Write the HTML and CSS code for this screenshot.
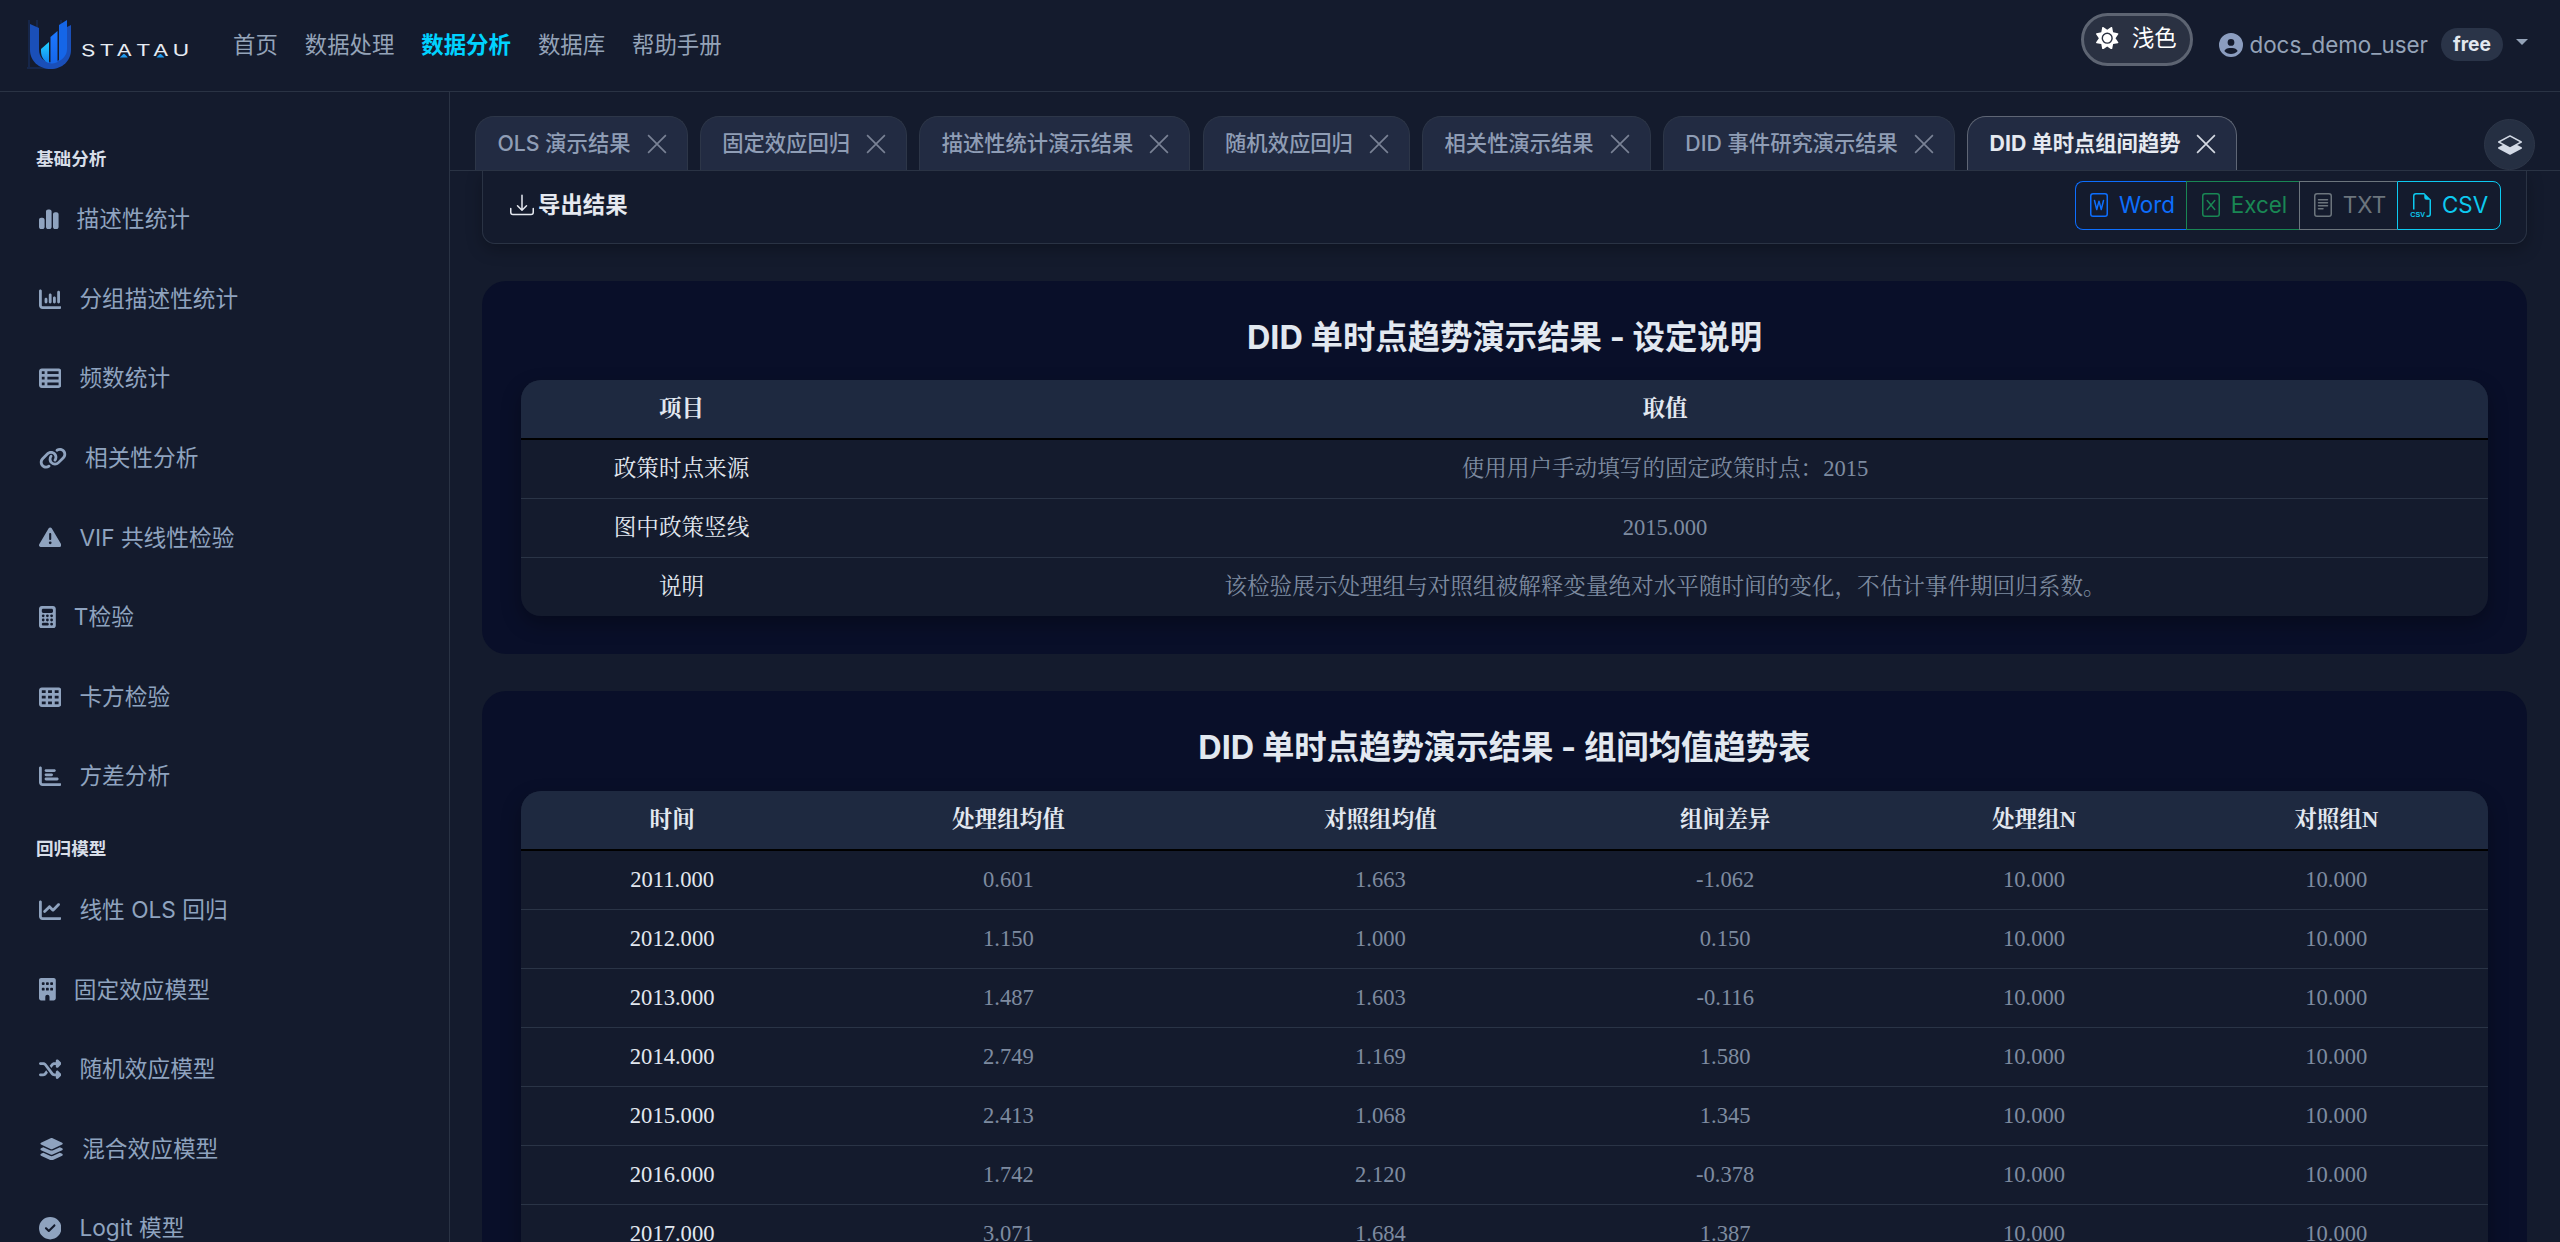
FILE: index.html
```html
<!DOCTYPE html>
<html lang="zh-CN">
<head>
<meta charset="utf-8">
<title>STATAU</title>
<link rel="stylesheet" href="styles.css">
</head>
<body>
<header class="topbar">
  <a class="logo">
    <svg class="logo-mark" viewBox="0 0 46 54">
      <defs>
        <linearGradient id="lg1" x1="0" y1="0" x2="0" y2="1"><stop offset="0" stop-color="#22d3ff"/><stop offset="1" stop-color="#1180f0"/></linearGradient>
        <linearGradient id="lg2" x1="0" y1="0" x2="0" y2="1"><stop offset="0" stop-color="#1d78ff"/><stop offset="1" stop-color="#1566e8"/></linearGradient>
      </defs>
      <path d="M2 1v47M10 1v40M34 1v40M0 49h22" class="logo-guide"/>
      <path d="M3 5 L12 9 V30 C12 39 17 43 24 43 C31 43 38 39 38 31 V9 L44 6 V31 C44 42 35 50 24 50 C12 50 3 42 3 31 Z" fill="#1a4fb8"/>
      <path d="M14 30 L22 23 V44 C18 43 14 39 14 32 Z" fill="url(#lg1)"/>
      <path d="M23.500 18 L30.500 12 V43 C28 44 26 44.500 23.500 44.500 Z" fill="url(#lg2)"/>
      <path d="M32 6 L40 1 V30 C40 36 36 40 32 42 Z" fill="#1566e8"/>
    </svg>
    <span class="logo-text">ST<span class="logo-a">A</span>T<span class="logo-a">A</span>U</span>
  </a>
  <nav class="mainnav">
    <a>首页</a><a>数据处理</a><a class="on">数据分析</a><a>数据库</a><a>帮助手册</a>
  </nav>
  <div class="topright">
    <button class="theme">
      <svg class="ic w512" viewBox="0 0 512 512"><path d="M361.5 1.2c5 2.1 8.6 6.6 9.6 11.9L391 121l107.9 19.8c5.3 1 9.8 4.6 11.9 9.6s1.500 10.700-1.600 15.200L446.900 256l62.300 90.300c3.100 4.500 3.700 10.200 1.600 15.200s-6.600 8.600-11.900 9.600L391 391 371.100 498.900c-1 5.300-4.600 9.800-9.600 11.900s-10.700 1.500-15.200-1.600L256 446.900l-90.300 62.300c-4.500 3.100-10.200 3.700-15.200 1.600s-8.600-6.600-9.600-11.900L121 391 13.100 371.100c-5.300-1-9.800-4.600-11.900-9.600s-1.500-10.700 1.600-15.200L65.100 256 2.800 165.700c-3.100-4.500-3.700-10.200-1.600-15.200s6.600-8.600 11.900-9.600L121 121 140.900 13.100c1-5.300 4.600-9.800 9.600-11.900s10.700-1.500 15.200 1.600L256 65.100 346.300 2.800c4.500-3.100 10.200-3.700 15.200-1.600zM160 256a96 96 0 1 1 192 0 96 96 0 1 1 -192 0zm224 0a128 128 0 1 0 -256 0 128 128 0 1 0 256 0z"/></svg>
      <span>浅色</span>
    </button>
    <div class="user">
      <svg class="ic w512" viewBox="0 0 512 512"><path d="M399 384.200C376.900 345.800 335.400 320 288 320H224c-47.400 0-88.900 25.800-111 64.200c35.200 39.200 86.200 63.800 143 63.800s107.800-24.700 143-63.800zM0 256a256 256 0 1 1 512 0A256 256 0 1 1 0 256zm256 16a72 72 0 1 0 0-144 72 72 0 1 0 0 144z"/></svg>
      <span class="uname">docs_demo_user</span>
      <span class="badge">free</span>
      <span class="caret"></span>
    </div>
  </div>
</header>

<div class="shell">
  <aside class="sidebar">
    <div class="sec">基础分析</div>
    <a class="item"><svg class="ic w448" viewBox="0 0 448 512"><path d="M160 80c0-26.500 21.500-48 48-48h32c26.500 0 48 21.500 48 48V432c0 26.500-21.500 48-48 48H208c-26.500 0-48-21.500-48-48V80zM0 272c0-26.500 21.500-48 48-48H80c26.500 0 48 21.500 48 48V432c0 26.500-21.500 48-48 48H48c-26.500 0-48-21.500-48-48V272zM368 96h32c26.500 0 48 21.500 48 48V432c0 26.500-21.500 48-48 48H368c-26.500 0-48-21.500-48-48V144c0-26.500 21.500-48 48-48z"/></svg><span>描述性统计</span></a>
    <a class="item"><svg class="ic w512" viewBox="0 0 512 512"><path d="M32 32c17.700 0 32 14.300 32 32V400c0 8.800 7.200 16 16 16H480c17.700 0 32 14.300 32 32s-14.300 32-32 32H80c-44.200 0-80-35.800-80-80V64C0 46.300 14.300 32 32 32zM160 224c17.700 0 32 14.300 32 32v64c0 17.700-14.300 32-32 32s-32-14.300-32-32V256c0-17.700 14.300-32 32-32zm128-64V320c0 17.700-14.300 32-32 32s-32-14.300-32-32V160c0-17.700 14.300-32 32-32s32 14.300 32 32zm64 32c17.700 0 32 14.300 32 32v96c0 17.700-14.300 32-32 32s-32-14.300-32-32V224c0-17.700 14.300-32 32-32zM480 96V320c0 17.700-14.300 32-32 32s-32-14.300-32-32V96c0-17.700 14.300-32 32-32s32 14.300 32 32z"/></svg><span>分组描述性统计</span></a>
    <a class="item"><svg class="ic w512" viewBox="0 0 512 512"><path d="M0 96C0 60.700 28.700 32 64 32H448c35.300 0 64 28.700 64 64V416c0 35.300-28.700 64-64 64H64c-35.300 0-64-28.700-64-64V96zm64 0v64h64V96H64zm384 0H192v64H448V96zM64 224v64h64V224H64zm384 0H192v64H448V224zM64 352v64h64V352H64zm384 0H192v64H448V352z"/></svg><span>频数统计</span></a>
    <a class="item"><svg class="ic w640" viewBox="0 0 640 512"><path d="M579.800 267.700c56.500-56.500 56.500-148 0-204.500c-50-50-128.800-56.500-186.300-15.400l-1.600 1.100c-14.400 10.300-17.700 30.300-7.400 44.600s30.300 17.700 44.600 7.400l1.600-1.100c32.100-22.900 76-19.300 103.800 8.600c31.500 31.500 31.500 82.500 0 114L422.300 334.800c-31.500 31.500-82.500 31.500-114 0c-27.900-27.900-31.500-71.800-8.600-103.800l1.100-1.600c10.300-14.400 6.900-34.400-7.400-44.600s-34.400-6.900-44.600 7.400l-1.100 1.600C206.500 251.200 213 330 263 380c56.500 56.500 148 56.500 204.500 0L579.800 267.700zM60.200 244.300c-56.500 56.500-56.500 148 0 204.500c50 50 128.800 56.500 186.300 15.400l1.600-1.100c14.400-10.300 17.700-30.300 7.400-44.600s-30.300-17.700-44.600-7.400l-1.600 1.100c-32.100 22.900-76 19.300-103.800-8.600C74 372 74 321 105.500 289.500L217.700 177.200c31.500-31.500 82.500-31.500 114 0c27.900 27.900 31.500 71.800 8.600 103.900l-1.100 1.600c-10.300 14.400-6.900 34.400 7.400 44.600s34.400 6.900 44.600-7.400l1.100-1.600C433.500 260.800 427 182 377 132c-56.500-56.500-148-56.500-204.500 0L60.200 244.300z"/></svg><span>相关性分析</span></a>
    <a class="item"><svg class="ic w512" viewBox="0 0 512 512"><path d="M256 32c14.200 0 27.300 7.500 34.500 19.800l216 368c7.300 12.400 7.300 27.700 .2 40.100S486.300 480 472 480H40c-14.300 0-27.600-7.700-34.700-20.100s-7-27.800 .2-40.100l216-368C228.700 39.500 241.800 32 256 32zm0 128c-13.300 0-24 10.700-24 24V296c0 13.300 10.700 24 24 24s24-10.700 24-24V184c0-13.300-10.700-24-24-24zm32 224a32 32 0 1 0 -64 0 32 32 0 1 0 64 0z"/></svg><span>VIF 共线性检验</span></a>
    <a class="item"><svg class="ic w384" viewBox="0 0 384 512"><path d="M64 0C28.700 0 0 28.700 0 64V448c0 35.300 28.700 64 64 64H320c35.300 0 64-28.700 64-64V64c0-35.300-28.700-64-64-64H64zM96 64H288c17.700 0 32 14.300 32 32v32c0 17.700-14.300 32-32 32H96c-17.700 0-32-14.300-32-32V96c0-17.700 14.300-32 32-32zm32 160a32 32 0 1 1 -64 0 32 32 0 1 1 64 0zM96 352a32 32 0 1 1 0-64 32 32 0 1 1 0 64zM64 416c0-17.700 14.300-32 32-32h96c17.700 0 32 14.300 32 32s-14.300 32-32 32H96c-17.700 0-32-14.300-32-32zM192 256a32 32 0 1 1 0-64 32 32 0 1 1 0 64zm32 64a32 32 0 1 1 -64 0 32 32 0 1 1 64 0zm64-64a32 32 0 1 1 0-64 32 32 0 1 1 0 64zm32 64a32 32 0 1 1 -64 0 32 32 0 1 1 64 0zm0 96a32 32 0 1 1 -64 0 32 32 0 1 1 64 0z"/></svg><span>T检验</span></a>
    <a class="item"><svg class="ic w512" viewBox="0 0 512 512"><path d="M64 32C28.700 32 0 60.700 0 96V416c0 35.300 28.700 64 64 64H448c35.300 0 64-28.700 64-64V96c0-35.300-28.700-64-64-64H64zm88 64v64H64V96h88zm56 0h88v64H208V96zm240 0v64H360V96h88zM64 224h88v64H64V224zm232 0v64H208V224h88zm64 0h88v64H360V224zM152 352v64H64V352h88zm56 0h88v64H208V352zm240 0v64H360V352h88z"/></svg><span>卡方检验</span></a>
    <a class="item"><svg class="ic w512" viewBox="0 0 512 512"><path d="M32 32c17.700 0 32 14.300 32 32V400c0 8.800 7.200 16 16 16H480c17.700 0 32 14.300 32 32s-14.300 32-32 32H80c-44.200 0-80-35.800-80-80V64C0 46.300 14.300 32 32 32zm96 96c0-17.700 14.300-32 32-32l192 0c17.700 0 32 14.300 32 32s-14.300 32-32 32l-192 0c-17.700 0-32-14.300-32-32zm32 64H288c17.700 0 32 14.300 32 32s-14.300 32-32 32H160c-17.700 0-32-14.300-32-32s14.300-32 32-32zm0 96H416c17.700 0 32 14.300 32 32s-14.300 32-32 32H160c-17.700 0-32-14.300-32-32s14.300-32 32-32z"/></svg><span>方差分析</span></a>
    <div class="sec sec-next">回归模型</div>
    <a class="item"><svg class="ic w512" viewBox="0 0 512 512"><path d="M64 64c0-17.700-14.300-32-32-32S0 46.300 0 64V400c0 44.200 35.800 80 80 80H480c17.700 0 32-14.300 32-32s-14.300-32-32-32H80c-8.800 0-16-7.200-16-16V64zm406.600 86.600c12.500-12.500 12.500-32.800 0-45.300s-32.800-12.500-45.300 0L320 210.700l-57.400-57.400c-12.500-12.500-32.800-12.500-45.300 0l-112 112c-12.500 12.500-12.500 32.800 0 45.300s32.800 12.500 45.300 0L240 221.300l57.400 57.400c12.500 12.500 32.800 12.500 45.300 0l128-128z"/></svg><span>线性 OLS 回归</span></a>
    <a class="item"><svg class="ic w384" viewBox="0 0 384 512"><path d="M48 0C21.500 0 0 21.500 0 48V464c0 26.500 21.500 48 48 48h96V432c0-26.500 21.500-48 48-48s48 21.500 48 48v80h96c26.500 0 48-21.500 48-48V48c0-26.500-21.500-48-48-48H48zM64 240c0-8.800 7.200-16 16-16h32c8.800 0 16 7.200 16 16v32c0 8.800-7.200 16-16 16H80c-8.800 0-16-7.200-16-16V240zm112-16h32c8.800 0 16 7.200 16 16v32c0 8.800-7.200 16-16 16H176c-8.800 0-16-7.200-16-16V240c0-8.800 7.200-16 16-16zm80 16c0-8.800 7.200-16 16-16h32c8.800 0 16 7.200 16 16v32c0 8.800-7.200 16-16 16H272c-8.800 0-16-7.200-16-16V240zM80 96h32c8.800 0 16 7.200 16 16v32c0 8.800-7.200 16-16 16H80c-8.800 0-16-7.200-16-16V112c0-8.800 7.200-16 16-16zm80 16c0-8.800 7.200-16 16-16h32c8.800 0 16 7.200 16 16v32c0 8.800-7.200 16-16 16H176c-8.800 0-16-7.200-16-16V112zM272 96h32c8.800 0 16 7.200 16 16v32c0 8.800-7.200 16-16 16H272c-8.800 0-16-7.200-16-16V112c0-8.800 7.200-16 16-16z"/></svg><span>固定效应模型</span></a>
    <a class="item"><svg class="ic w512" viewBox="0 0 512 512"><path d="M403.800 34.400c12-5 25.700-2.200 34.900 6.900l64 64c6 6 9.400 14.100 9.400 22.600s-3.400 16.600-9.400 22.600l-64 64c-9.200 9.200-22.900 11.900-34.900 6.900s-19.800-16.600-19.800-29.600V160H352c-10.100 0-19.600 4.700-25.600 12.800L284 229.300 244 176l31.200-41.600C293.300 110.200 321.800 96 352 96h32V64c0-12.900 7.800-24.600 19.800-29.600zM164 282.700L204 336l-31.200 41.600C154.700 401.800 126.200 416 96 416H32c-17.700 0-32-14.300-32-32s14.300-32 32-32H96c10.100 0 19.600-4.700 25.600-12.800L164 282.700zm274.600 188c-9.200 9.200-22.900 11.900-34.900 6.900s-19.800-16.600-19.800-29.600V416H352c-30.200 0-58.700-14.200-76.800-38.400L121.600 172.800c-6-8.100-15.500-12.800-25.600-12.800H32c-17.700 0-32-14.300-32-32s14.300-32 32-32H96c30.200 0 58.700 14.200 76.800 38.400L326.400 339.200c6 8.100 15.500 12.800 25.600 12.800h32V320c0-12.900 7.800-24.600 19.800-29.600s25.700-2.200 34.900 6.900l64 64c6 6 9.400 14.100 9.400 22.600s-3.400 16.600-9.400 22.600l-64 64z"/></svg><span>随机效应模型</span></a>
    <a class="item"><svg class="ic w576" viewBox="0 0 576 512"><path d="M264.500 5.200c14.900-6.900 32.100-6.900 47 0l218.600 101c8.500 3.900 13.900 12.400 13.900 21.800s-5.400 17.900-13.900 21.800l-218.600 101c-14.900 6.900-32.100 6.900-47 0L45.900 149.800C37.400 145.800 32 137.300 32 128s5.400-17.900 13.900-21.800L264.500 5.200zM476.900 209.600l53.200 24.600c8.500 3.900 13.900 12.400 13.900 21.800s-5.400 17.900-13.900 21.800l-218.600 101c-14.900 6.900-32.100 6.900-47 0L45.900 277.800C37.400 273.800 32 265.300 32 256s5.400-17.900 13.900-21.800l53.200-24.600 152 70.200c23.400 10.800 50.400 10.800 73.800 0l152-70.200zm-152 198.200l152-70.200 53.200 24.600c8.500 3.900 13.900 12.400 13.900 21.800s-5.400 17.900-13.900 21.800l-218.600 101c-14.900 6.900-32.100 6.900-47 0L45.900 405.800C37.400 401.800 32 393.300 32 384s5.400-17.900 13.900-21.800l53.200-24.600 152 70.200c23.400 10.800 50.400 10.800 73.800 0z"/></svg><span>混合效应模型</span></a>
    <a class="item"><svg class="ic w512" viewBox="0 0 512 512"><path d="M256 512A256 256 0 1 0 256 0a256 256 0 1 0 0 512zM369 209L241 337c-9.400 9.400-24.600 9.400-33.900 0l-64-64c-9.400-9.400-9.400-24.600 0-33.900s24.600-9.400 33.900 0l47 47L335 175c9.400-9.400 24.600-9.400 33.900 0s9.400 24.600 0 33.900z"/></svg><span>Logit 模型</span></a>
  </aside>

  <main class="main">
    <div class="tabbar">
      <div class="tabs">
        <a class="tab">OLS 演示结果<svg class="x" viewBox="0 0 18 18"><path d="M1 1 17 17M17 1 1 17"/></svg></a>
        <a class="tab">固定效应回归<svg class="x" viewBox="0 0 18 18"><path d="M1 1 17 17M17 1 1 17"/></svg></a>
        <a class="tab">描述性统计演示结果<svg class="x" viewBox="0 0 18 18"><path d="M1 1 17 17M17 1 1 17"/></svg></a>
        <a class="tab">随机效应回归<svg class="x" viewBox="0 0 18 18"><path d="M1 1 17 17M17 1 1 17"/></svg></a>
        <a class="tab">相关性演示结果<svg class="x" viewBox="0 0 18 18"><path d="M1 1 17 17M17 1 1 17"/></svg></a>
        <a class="tab">DID 事件研究演示结果<svg class="x" viewBox="0 0 18 18"><path d="M1 1 17 17M17 1 1 17"/></svg></a>
        <a class="tab active">DID 单时点组间趋势<svg class="x" viewBox="0 0 18 18"><path d="M1 1 17 17M17 1 1 17"/></svg></a>
      </div>
      <button class="layers"><svg viewBox="0 0 16 16"><path d="M8.235 1.559a.5.5 0 0 0-.47 0l-7.5 4a.5.5 0 0 0 0 .882L3.188 8 .264 9.559a.5.5 0 0 0 0 .882l7.5 4a.5.5 0 0 0 .47 0l7.500-4a.5.5 0 0 0 0-.882L12.813 8l2.922-1.559a.5.5 0 0 0 0-.882l-7.500-4zM8 9.433 1.562 6 8 2.567 14.438 6 8 9.433z"/></svg></button>
    </div>

    <div class="content">
      <div class="exportbar">
        <div class="export-title">
          <svg viewBox="0 0 16 16"><path d="M.5 9.900a.5.5 0 0 1 .5.500v2.500a1 1 0 0 0 1 1h12a1 1 0 0 0 1-1v-2.500a.5.5 0 0 1 1 0v2.500a2 2 0 0 1-2 2H2a2 2 0 0 1-2-2v-2.500a.5.5 0 0 1 .5-.5z"/><path d="M7.646 11.854a.5.5 0 0 0 .708 0l3-3a.5.5 0 0 0-.708-.708L8.500 10.293V1.500a.5.5 0 0 0-1 0v8.793L5.354 8.146a.5.5 0 1 0-.708.708l3 3z"/></svg>
          <span>导出结果</span>
        </div>
        <div class="btn-group">
          <a class="ebtn word"><svg viewBox="0 0 16 16"><path d="M4.879 4.515a.5.5 0 0 1 .606.364l1.036 4.144.997-3.655a.5.5 0 0 1 .964 0l.997 3.655 1.036-4.144a.5.5 0 0 1 .97.242l-1.500 6a.5.5 0 0 1-.967.01L8 7.402l-1.018 3.730a.5.5 0 0 1-.967-.01l-1.500-6a.5.5 0 0 1 .364-.606z"/><path d="M4 0a2 2 0 0 0-2 2v12a2 2 0 0 0 2 2h8a2 2 0 0 0 2-2V2a2 2 0 0 0-2-2H4zm0 1h8a1 1 0 0 1 1 1v12a1 1 0 0 1-1 1H4a1 1 0 0 1-1-1V2a1 1 0 0 1 1-1z"/></svg>Word</a>
          <a class="ebtn excel"><svg viewBox="0 0 16 16"><path d="M5.180 4.616a.5.5 0 0 1 .704.064L8 7.219l2.116-2.540a.5.5 0 1 1 .768.641L8.651 8l2.233 2.680a.5.5 0 0 1-.768.640L8 8.781l-2.116 2.540a.5.5 0 0 1-.768-.641L7.349 8 5.116 5.320a.5.5 0 0 1 .064-.704z"/><path d="M4 0a2 2 0 0 0-2 2v12a2 2 0 0 0 2 2h8a2 2 0 0 0 2-2V2a2 2 0 0 0-2-2H4zm0 1h8a1 1 0 0 1 1 1v12a1 1 0 0 1-1 1H4a1 1 0 0 1-1-1V2a1 1 0 0 1 1-1z"/></svg>Excel</a>
          <a class="ebtn txt"><svg viewBox="0 0 16 16"><path d="M5 4a.5.5 0 0 0 0 1h6a.5.5 0 0 0 0-1H5zm-.5 2.500A.5.5 0 0 1 5 6h6a.5.5 0 0 1 0 1H5a.5.5 0 0 1-.5-.5zM5 8a.5.5 0 0 0 0 1h6a.5.5 0 0 0 0-1H5zm0 2a.5.5 0 0 0 0 1h3a.5.5 0 0 0 0-1H5z"/><path d="M4 0a2 2 0 0 0-2 2v12a2 2 0 0 0 2 2h8a2 2 0 0 0 2-2V2a2 2 0 0 0-2-2H4zm0 1h8a1 1 0 0 1 1 1v12a1 1 0 0 1-1 1H4a1 1 0 0 1-1-1V2a1 1 0 0 1 1-1z"/></svg>TXT</a>
          <a class="ebtn csv"><svg viewBox="0 0 16 16"><path d="M14 4.500V14a2 2 0 0 1-2 2h-1v-1h1a1 1 0 0 0 1-1V4.500h-2A1.500 1.500 0 0 1 9.500 3V1H4a1 1 0 0 0-1 1v9H2V2a2 2 0 0 1 2-2h5.500L14 4.500Z"/><text x="0.200" y="15.700" textLength="9.800" lengthAdjust="spacingAndGlyphs" class="csv-mini">CSV</text></svg>CSV</a>
        </div>
      </div>

      <section class="card first">
        <h2>DID 单时点趋势演示结果 - 设定说明</h2>
        <div class="tblwrap">
          <table class="t1">
            <colgroup><col class="c-item"><col></colgroup>
            <thead><tr><th>项目</th><th>取值</th></tr></thead>
            <tbody>
              <tr><th>政策时点来源</th><td>使用用户手动填写的固定政策时点：2015</td></tr>
              <tr><th>图中政策竖线</th><td>2015.000</td></tr>
              <tr><th>说明</th><td>该检验展示处理组与对照组被解释变量绝对水平随时间的变化，不估计事件期回归系数。</td></tr>
            </tbody>
          </table>
        </div>
      </section>

      <section class="card">
        <h2>DID 单时点趋势演示结果 - 组间均值趋势表</h2>
        <div class="tblwrap">
          <table class="t2">
            <colgroup><col class="c1"><col class="c2"><col class="c3"><col class="c4"><col class="c5"><col class="c6"></colgroup>
            <thead><tr><th>时间</th><th>处理组均值</th><th>对照组均值</th><th>组间差异</th><th>处理组N</th><th>对照组N</th></tr></thead>
            <tbody>
              <tr><th>2011.000</th><td>0.601</td><td>1.663</td><td>-1.062</td><td>10.000</td><td>10.000</td></tr>
              <tr><th>2012.000</th><td>1.150</td><td>1.000</td><td>0.150</td><td>10.000</td><td>10.000</td></tr>
              <tr><th>2013.000</th><td>1.487</td><td>1.603</td><td>-0.116</td><td>10.000</td><td>10.000</td></tr>
              <tr><th>2014.000</th><td>2.749</td><td>1.169</td><td>1.580</td><td>10.000</td><td>10.000</td></tr>
              <tr><th>2015.000</th><td>2.413</td><td>1.068</td><td>1.345</td><td>10.000</td><td>10.000</td></tr>
              <tr><th>2016.000</th><td>1.742</td><td>2.120</td><td>-0.378</td><td>10.000</td><td>10.000</td></tr>
              <tr><th>2017.000</th><td>3.071</td><td>1.684</td><td>1.387</td><td>10.000</td><td>10.000</td></tr>
            </tbody>
          </table>
        </div>
      </section>
    </div>
  </main>
</div>
</body>
</html>
```
FILE: styles.css
```css
* { box-sizing: border-box; }
html, body { height: 100%; margin: 0; }
body {
  overflow: hidden;
  background: #141b2d;
  color: #94a3b8;
  font-family: "Inter", "Noto Sans CJK SC", sans-serif;
  font-size: 22.4px;
  line-height: 1.5;
  display: flex;
  flex-direction: column;
}
a { color: inherit; text-decoration: none; }
button { font: inherit; color: inherit; }
.ic { height: 22.4px; fill: currentColor; flex: none; display: block; }
.w384 { width: 16.8px; }
.w448 { width: 19.6px; }
.w512 { width: 22.4px; }
.w576 { width: 25.2px; }
.w640 { width: 28px; }

/* top bar */
.topbar {
  height: 92px;
  flex: none;
  display: flex;
  align-items: center;
  border-bottom: 1px solid #2a3344;
  padding: 0 32px 0 27px;
}
.logo { display: flex; align-items: center; width: 206px; flex: none; }
.logo-mark { width: 46px; height: 54px; flex: none; }
.logo-guide { fill: none; stroke: #1d4aa0; stroke-width: .5; }
.logo-text {
  margin-left: 8px;
  margin-top: 9px;
  font-size: 16.5px;
  line-height: 20px;
  letter-spacing: 3px;
  color: #e6ebf2;
  font-family: "Inter", sans-serif;
  transform: scaleX(1.37);
  transform-origin: left center;
}
.logo-a { position: relative; }
.logo-a::after {
  content: "";
  position: absolute;
  left: 2.5px;
  bottom: 2.5px;
  width: 6px;
  height: 4px;
  background: #1e9bf0;
  clip-path: polygon(50% 0, 100% 100%, 0 100%);
}
.mainnav { display: flex; gap: 27px; margin-top: -1px; }
.mainnav .on { color: #00d2ff; font-weight: 700; }
.topright { margin-left: auto; display: flex; align-items: center; }
.theme {
  display: flex;
  align-items: center;
  gap: 13px;
  height: 53px;
  width: 112px;
  padding: 0 0 3px 12px;
  border: 3px solid #5d6472;
  border-radius: 27px;
  background: #2a3142;
  color: #fff;
  margin-top: -12px;
}
.user { display: flex; align-items: center; margin-left: 26px; margin-top: -1px; }
.user .ic { fill: #8b9dbf; width: 24px; height: 24px; }
.uname { margin-left: 6px; }
.badge {
  margin-left: 13px;
  width: 62px;
  height: 33px;
  border-radius: 17px;
  background: #2a3448;
  color: #e2e8f0;
  font-size: 19.2px;
  font-weight: 700;
  line-height: 33px;
  text-align: center;
}
.caret {
  margin: -6px 0 0 13px;
  width: 0;
  height: 0;
  border-left: 6px solid transparent;
  border-right: 6px solid transparent;
  border-top: 6px solid #94a3b8;
}

/* shell */
.shell { flex: 1; display: flex; min-height: 0; }
.sidebar {
  width: 450px;
  flex: none;
  border-right: 1px solid #2a3344;
  padding: 55.5px 0 0 39px;
  overflow: hidden;
}
.sec {
  margin: 0 0 11px -3px;
  font-size: 17.6px;
  line-height: 21px;
  font-weight: 700;
  color: #d8dee8;
}
.sec-next { margin-top: 22px; }
.item { display: flex; align-items: center; gap: 18px; height: 79.6px; color: #8fa3bf; font-size: 22.7px; }

/* main */
.main { flex: 1; min-width: 0; display: flex; flex-direction: column; }
.tabbar {
  flex: none;
  height: 79px;
  padding: 24px 25px 0 25px;
  display: flex;
  justify-content: space-between;
  align-items: flex-end;
  border-bottom: 1px solid #2a3344;
}
.tabs { display: flex; gap: 12.2px; }
.tab {
  display: flex;
  align-items: center;
  gap: 16px;
  height: 54px;
  padding: 0 20px 0 21.5px;
  background: #222b42;
  border: 1px solid #2d3648;
  border-bottom: 0;
  border-radius: 19px 19px 0 0;
  font-size: 21.3px;
  font-weight: 500;
  color: #8f9db5;
  white-space: nowrap;
}
.x { width: 20px; height: 20px; fill: none; stroke: #798295; stroke-width: 1.5; flex: none; }
.tab.active { color: #e5e9f0; border-color: #5f6675; border-width: 1px 1px 2px; font-weight: 700; }
.tab.active .x { stroke: #d4d9e2; }
.layers {
  width: 51px;
  height: 51px;
  padding: 0;
  border-radius: 50%;
  background: #252f42;
  border: 1px solid #2d3648;
  display: flex;
  align-items: center;
  justify-content: center;
}
.layers svg { width: 24px; height: 24px; fill: #d3dae6; }

.content { flex: 1; min-height: 0; overflow: hidden; padding: 0 33px 0 32px; }
.exportbar {
  height: 73px;
  display: flex;
  justify-content: space-between;
  align-items: center;
  padding: 0 25px 4px 27px;
  border: 1px solid #2a3344;
  border-top: 0;
  border-radius: 0 0 13px 13px;
  box-shadow: 0 6px 16px rgba(0, 0, 0, .25);
  margin-bottom: 37px;
}
.export-title { display: flex; align-items: center; gap: 4px; color: #e5e9f0; font-weight: 700; }
.export-title svg { width: 24px; height: 24px; fill: #e5e9f0; }
.btn-group { display: flex; height: 49px; }
.ebtn {
  display: flex;
  align-items: center;
  justify-content: center;
  gap: 8px;
  border: 1.6px solid currentColor;
  border-right-width: 0;
  height: 49px;
}
.ebtn svg { width: 24px; height: 24px; fill: currentColor; flex: none; overflow: visible; }
.word { color: #0d6efd; width: 111px; border-radius: 8px 0 0 8px; }
.excel { color: #198754; width: 113px; }
.txt { color: #6c757d; width: 98px; }
.csv { color: #0dcaf0; width: 104px; border-right-width: 1.6px; border-radius: 0 8px 8px 0; }
.csv-mini { font: 700 5.4px "Liberation Sans", sans-serif; fill: currentColor; }

.card {
  background: #090f29;
  border-radius: 24px;
  padding: 38px 39px 37px 39px;
  margin-bottom: 37px;
}
.card h2 {
  margin: 0 0 24px;
  font-size: 32.4px;
  line-height: 38px;
  font-weight: 700;
  text-align: center;
  color: #e2e8f0;
}
.card.first { padding-bottom: 38px; }
.card.first h2 { margin-bottom: 23px; }
.tblwrap {
  border-radius: 20px;
  overflow: hidden;
  box-shadow: 0 8px 20px rgba(0, 0, 0, .3);
}
table {
  width: 100%;
  border-collapse: collapse;
  table-layout: fixed;
  background: #141b2d;
  font-family: "Liberation Serif", "Noto Serif CJK SC", serif;
  font-size: 22.6px;
}
th, td { height: 59px; padding: 0; text-align: center; font-weight: 400; border-top: 1px solid #2a3446; }
thead th { background: #1e2940; color: #e2e8f0; font-weight: 700; border-top: 0; border-bottom: 2px solid #000; }
tbody th { color: #e2e8f0; }
td { color: #7e8ba0; }
tbody tr:first-child th, tbody tr:first-child td { border-top: 0; }
.c-item { width: 321px; }
.c1 { width: 302px; }
.c2 { width: 370px; }
.c3 { width: 373px; }
.c4 { width: 316px; }
.c5 { width: 301px; }
.c6 { width: 303px; }
```
